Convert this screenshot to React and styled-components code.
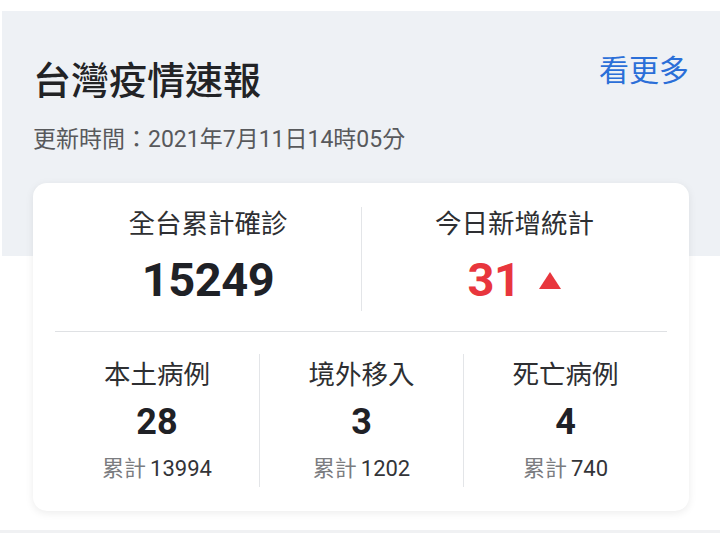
import React from "react";
import styled, { createGlobalStyle } from "styled-components";

const GlobalStyle = createGlobalStyle`
  html, body {
    margin: 0;
    padding: 0;
    background: #ffffff;
  }
  body {
    font-family: Roboto, "Noto Sans CJK TC", "Noto Sans", sans-serif;
  }
`;

// Página
const Page = styled.div`
  width: 720px;
  height: 533px;
  overflow: hidden;
  padding-top: 11px;
  box-sizing: border-box;
  background: #ffffff;
`;

// Bloque gris superior con la tarjeta encima
const Hero = styled.section`
  margin-left: 2px;
  padding: 45px 31px 0;
  background: linear-gradient(#eef1f5 0, #eef1f5 245px, #ffffff 245px);
`;

const HeaderRow = styled.div`
  display: flex;
  justify-content: space-between;
  align-items: flex-start;
`;

const Title = styled.h1`
  margin: 0;
  font-size: 38px;
  line-height: 50px;
  font-weight: 500;
  color: #222326;
`;

const MoreLink = styled.a`
  font-size: 30px;
  line-height: 30px;
  color: #2b6fd8;
  text-decoration: none;
  cursor: pointer;
`;

const Updated = styled.p`
  margin: 19px 0 0;
  font-size: 23px;
  line-height: 30px;
  color: #58595c;
`;

// Tarjeta
const Card = styled.div`
  margin-top: 28px;
  padding: 24px 22px 24px;
  background: #ffffff;
  border-radius: 14px;
  box-shadow: 0 2px 8px rgba(0, 0, 0, 0.08);
`;

const Row = styled.div`
  display: grid;
  grid-template-columns: repeat(${(p) => p.cols}, 1fr);
`;

const Cell = styled.div`
  display: flex;
  flex-direction: column;
  align-items: center;
  padding: ${(p) => (p.small ? "4px 0 3px" : "0 0 2px")};
  border-left: ${(p) => (p.first ? "none" : "1px solid #e3e5e8")};
`;

const Label = styled.div`
  font-size: 26.5px;
  line-height: 34px;
  color: #2e2f32;
`;

const Value = styled.div`
  display: flex;
  align-items: center;
  margin-top: ${(p) => (p.small ? "8px" : "10px")};
  font-size: ${(p) => (p.small ? "36px" : "47px")};
  line-height: ${(p) => (p.small ? "44px" : "58px")};
  font-weight: 700;
  letter-spacing: ${(p) => (p.small ? "0" : "-0.5px")};
  color: ${(p) => (p.red ? "#e8363d" : "#1f2126")};
`;

const UpArrow = styled.span`
  width: 0;
  height: 0;
  margin-left: 19px;
  border-left: 11px solid transparent;
  border-right: 11px solid transparent;
  border-bottom: 17px solid #e8363d;
`;

const Divider = styled.hr`
  margin: 20px 0 22px;
  border: none;
  border-top: 1px solid #dfe1e4;
`;

const Total = styled.div`
  margin-top: 10px;
  font-size: 22px;
  line-height: 30px;
  color: #333438;
`;

const TotalLabel = styled.span`
  color: #7b7c80;
  margin-right: 4px;
`;

const BottomStrip = styled.div`
  margin-top: 19px;
  height: 40px;
  background: #f0f1f3;
`;

const details = [
  { label: "本土病例", value: 28, total: 13994 },
  { label: "境外移入", value: 3, total: 1202 },
  { label: "死亡病例", value: 4, total: 740 },
];

const App = () => {
  return (
    <Page>
      <GlobalStyle />
      <Hero>
        <HeaderRow>
          <Title>台灣疫情速報</Title>
          <MoreLink>看更多</MoreLink>
        </HeaderRow>
        <Updated>更新時間：2021年7月11日14時05分</Updated>

        <Card>
          <Row cols={2}>
            <Cell first>
              <Label>全台累計確診</Label>
              <Value>15249</Value>
            </Cell>
            <Cell>
              <Label>今日新增統計</Label>
              <Value red>
                31
                <UpArrow />
              </Value>
            </Cell>
          </Row>

          <Divider />

          <Row cols={3}>
            {details.map((d, i) => (
              <Cell key={d.label} first={i === 0} small>
                <Label>{d.label}</Label>
                <Value small>{d.value}</Value>
                <Total>
                  <TotalLabel>累計</TotalLabel>
                  {d.total}
                </Total>
              </Cell>
            ))}
          </Row>
        </Card>
      </Hero>
      <BottomStrip />
    </Page>
  );
};

export default App;
